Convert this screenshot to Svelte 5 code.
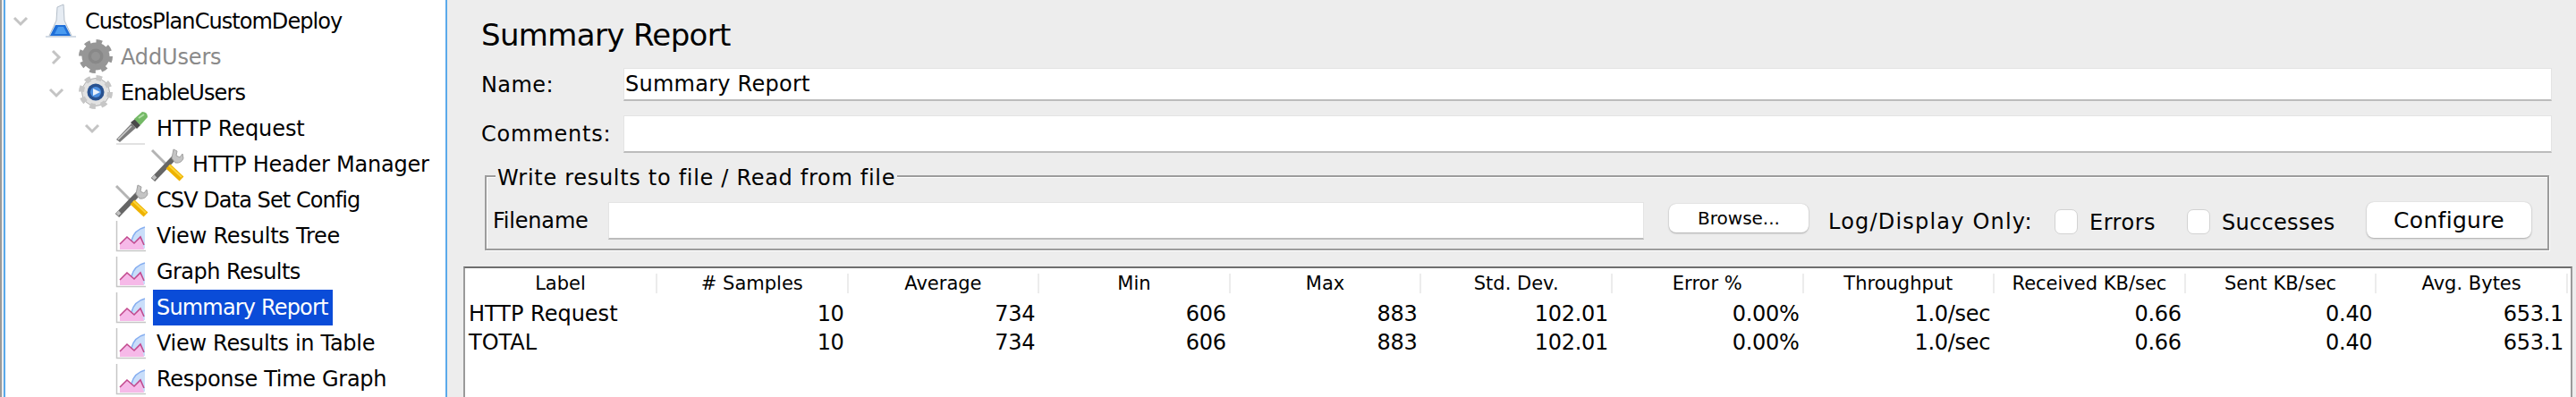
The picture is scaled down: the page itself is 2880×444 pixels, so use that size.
<script>
  const tree = [
    { depth: 0, arrow: 'down', icon: 'flask', label: 'CustosPlanCustomDeploy', ls: -0.95 },
    { depth: 1, arrow: 'right', icon: 'gearoff', label: 'AddUsers', off: true, ls: -0.15 },
    { depth: 1, arrow: 'down', icon: 'gear', label: 'EnableUsers', ls: -0.9 },
    { depth: 2, arrow: 'down', icon: 'dropper', label: 'HTTP Request', ls: -0.07 },
    { depth: 3, icon: 'tools', label: 'HTTP Header Manager', ls: -0.25 },
    { depth: 2, icon: 'tools', label: 'CSV Data Set Config', ls: -0.93 },
    { depth: 2, icon: 'chart', label: 'View Results Tree', ls: -0.22 },
    { depth: 2, icon: 'chart', label: 'Graph Results', ls: -0.55 },
    { depth: 2, icon: 'chart', label: 'Summary Report', selected: true, ls: -0.83 },
    { depth: 2, icon: 'chart', label: 'View Results in Table', ls: -0.3 },
    { depth: 2, icon: 'chart', label: 'Response Time Graph', ls: -0.3 }
  ];
  const headers = ['Label', '# Samples', 'Average', 'Min', 'Max', 'Std. Dev.', 'Error %', 'Throughput', 'Received KB/sec', 'Sent KB/sec', 'Avg. Bytes'];
  const rows = [
    ['HTTP Request', '10', '734', '606', '883', '102.01', '0.00%', '1.0/sec', '0.66', '0.40', '653.1'],
    ['TOTAL', '10', '734', '606', '883', '102.01', '0.00%', '1.0/sec', '0.66', '0.40', '653.1']
  ];
</script>

<div class="page">
  <div class="strip"></div>
  <aside class="tree">
    {#each tree as n}
      <div class="node" style="padding-left:{40 * n.depth + 3}px">
        <span class="arrow">
          {#if n.arrow === 'down'}
            <svg width="18" height="12" viewBox="0 0 18 12"><path d="M2 2 L9 9 L16 2" /></svg>
          {:else if n.arrow === 'right'}
            <svg width="12" height="18" viewBox="0 0 12 18"><path d="M2 2 L9 9 L2 16" /></svg>
          {/if}
        </span>
        <span class="icon">
          <svg width="40" height="40" viewBox="0 0 40 40" class="pic">
            {#if n.icon === 'flask'}
              <path d="M16 4 L23 1 L24 19 L32 36 L7 36 L15 19 Z" fill="#e6ecf3" stroke="#b4bec9" stroke-width="1" />
              <path d="M14 24 L25 24 L31 36 L8 36 Z" fill="#1f6fd8" />
              <path d="M17 26 L23 26 L27 34 L13 34 Z" fill="#4a9bf0" />
              <path d="M3 37 L37 37" stroke="#c4cfdc" stroke-width="1.5" />
            {:else if n.icon === 'gearoff'}
              <circle cx="19" cy="19" r="15.5" fill="#969696" />
              <circle cx="19" cy="19" r="16" fill="none" stroke="#969696" stroke-width="6" stroke-dasharray="6.3 6.27" />
              <circle cx="19" cy="19" r="8.5" fill="#888" />
              <circle cx="19" cy="19" r="5" fill="#949494" />
            {:else if n.icon === 'gear'}
              <circle cx="19" cy="19" r="15.5" fill="#e2e2e2" stroke="#b0b0b0" stroke-width="1" />
              <circle cx="19" cy="19" r="16" fill="none" stroke="#c6c6c6" stroke-width="6" stroke-dasharray="6.3 6.27" />
              <circle cx="19" cy="19" r="9.5" fill="#28518f" />
              <circle cx="19" cy="19" r="6" fill="#4d8fe0" />
              <path d="M16 15 L24 19 L16 23 Z" fill="#eaf2fc" />
            {:else if n.icon === 'dropper'}
              <path d="M2 37 L34 37" stroke="#d8d8d8" stroke-width="1.5" />
              <path d="M2 32 L19 14 L24 19 L6 35 Z" fill="#7c7c7c" />
              <path d="M4 32 L19 17" stroke="#d2d2d2" stroke-width="1.5" />
              <path d="M18 13 L23 9 L29 16 L25 20 Z" fill="#4a4a4a" />
              <path d="M22 9 L31 1 Q37 1 37 7 L29 16 Z" fill="#74b966" />
              <path d="M27 8 L33 4" stroke="#b0dfa6" stroke-width="2" />
            {:else if n.icon === 'tools'}
              <path d="M2 4 L21 23" stroke="#b4b4b4" stroke-width="3" />
              <path d="M3 37 L27 12" stroke="#666" stroke-width="6" />
              <path d="M3 36 L6 33" stroke="#c0c0c0" stroke-width="4" />
              <path d="M24 13 L26 3 L30 5 L29 10 L33 12 L36 8 L37 13 Q35 19 28 18 Z" fill="#c4c4c4" stroke="#a0a0a0" stroke-width="1" />
              <path d="M20 22 L35 36" stroke="#eeb200" stroke-width="7" />
              <path d="M21 21 L35 34" stroke="#fbd53a" stroke-width="2" />
            {:else}
              <path d="M2.5 3 L2.5 36.5 L35 36.5" fill="none" stroke="#c6c6c6" stroke-width="1.5" />
              <path d="M19 34 L19 25 Q22 13 34 10 L34 34 Z" fill="#c9defa" />
              <path d="M19 25 Q22 13 34 10" fill="none" stroke="#86aef0" stroke-width="1.5" />
              <path d="M6 35 L6 29 L14 21 L22 28 L29 21 L33 35 Z" fill="#f6b9e8" />
              <path d="M6 29 L14 21 L22 28 L29 21 L33 30" fill="none" stroke="#c2498e" stroke-width="1.6" />
            {/if}
          </svg>
        </span>
        <span class="lbl" class:off={n.off} class:sel={n.selected} style="letter-spacing:{n.ls}px">{n.label}</span>
      </div>
    {/each}
  </aside>

  <main class="main">
    <h1 class="title">Summary Report</h1>
    <div class="row name">
      <span class="cap name-cap">Name:</span>
      <div class="field name-field">Summary Report</div>
    </div>
    <div class="row comments">
      <span class="cap comments-cap">Comments:</span>
      <div class="field"></div>
    </div>

    <section class="group">
      <div class="legend">Write results to file / Read from file</div>
      <div class="file-row">
        <span class="fname">Filename</span>
        <div class="field file"></div>
        <button class="btn browse">Browse...</button>
        <span class="log">Log/Display Only:</span>
        <span class="check"></span><span class="chk-label errors">Errors</span>
        <span class="check"></span><span class="chk-label successes">Successes</span>
        <button class="btn configure">Configure</button>
      </div>
    </section>

    <div class="table">
      <div class="grid head">
        {#each headers as h}<div class="th">{h}</div>{/each}
      </div>
      {#each rows as r}
        <div class="grid data">
          {#each r as c, i}<div class="td" class:first={i === 0}>{c}</div>{/each}
        </div>
      {/each}
    </div>
  </main>
</div>

<style>
  :global(body) { margin: 0; background: #ededed; }
  .page {
    display: flex;
    width: 2880px;
    height: 444px;
    overflow: hidden;
    background: #ededed;
    font-family: "DejaVu Sans", sans-serif;
    color: #000;
    font-size: 24px;
  }
  .strip {
    width: 2px;
    margin-right: 2px;
    background: #9a9a9a;
    flex: none;
  }
  .tree {
    width: 492px;
    flex: none;
    background: #fff;
    border-left: 2px solid #5aa9ea;
    border-right: 2px solid #5aa9ea;
    padding-top: 4px;
    overflow: hidden;
  }
  .node {
    display: flex;
    align-items: center;
    height: 40px;
    margin-left: -6px;
    white-space: nowrap;
  }
  .arrow {
    width: 40px;
    height: 40px;
    flex: none;
    display: flex;
    align-items: center;
    justify-content: center;
  }
  .arrow path { fill: none; stroke: #c4c4c4; stroke-width: 3; }
  .icon { width: 48px; flex: none; height: 40px; padding-left: 5px; box-sizing: border-box; }
  .pic { display: block; filter: blur(0.5px); }
  .lbl { padding: 0 5px 0 4px; line-height: 40px; }
  .lbl.off { color: #8a8a8a; }
  .lbl.sel { background: #0a4cd8; color: #fff; }

  .main { flex: 1; min-width: 0; display: flex; flex-direction: column; }
  .title {
    margin: 0;
    height: 76px;
    padding: 19px 0 0 38px;
    box-sizing: border-box;
    font-weight: 400;
    font-size: 34px;
    line-height: 40px;
    letter-spacing: -0.65px;
  }
  .row { display: flex; align-items: center; padding: 0 27px 0 38px; }
  .cap { width: 159px; flex: none; }
  .name-cap { letter-spacing: 0.4px; }
  .comments-cap { letter-spacing: 0.8px; }
  .row .field { flex: 1; }
  .name { height: 37px; }
  .comments { height: 42px; margin-top: 16px; }
  .field {
    height: 100%;
    box-sizing: border-box;
    background: #fff;
    border: 1px solid #e4e4e4;
    border-bottom: 2px solid #bcbcbc;
  }
  .name-field { padding-left: 1px; line-height: 34px; letter-spacing: 0.25px; }

  .group {
    margin: 25px 30px 0 42px;
    height: 84px;
    box-sizing: border-box;
    border: 2px solid #9c9c9c;
    box-shadow: inset 1px 1px 0 #fff, 1px 1px 0 #fff;
  }
  .legend {
    width: fit-content;
    margin: -13px 0 0 10px;
    padding: 0 2px;
    height: 28px;
    line-height: 28px;
    background: #ededed;
    letter-spacing: 0.7px;
  }
  .file-row {
    display: flex;
    align-items: center;
    height: 42px;
    margin-top: 13px;
    padding-left: 7px;
  }
  .fname { width: 129px; flex: none; letter-spacing: -0.2px; }
  .file { width: 1158px; flex: none; }
  .btn {
    background: #fff;
    border: none;
    border-radius: 8px;
    box-shadow: 0 1px 2px #aaa, 0 0 1px #bbb;
    font-family: inherit;
    color: #000;
    padding: 0;
    flex: none;
  }
  .browse { width: 156px; height: 32px; margin-left: 28px; font-size: 20px; margin-top: -6px; }
  .log { width: 227px; margin-left: 22px; margin-right: 26px; flex: none; white-space: nowrap; letter-spacing: 1.2px; margin-top: 2px; }
  .check {
    width: 26px;
    height: 28px;
    flex: none;
    box-sizing: border-box;
    background: #fff;
    border: 1px solid #d2d2d2;
    border-radius: 7px;
    margin-top: 2px;
  }
  .chk-label { margin-left: 13px; flex: none; margin-top: 4px; }
  .errors { width: 109px; letter-spacing: 0.5px; }
  .successes { width: 162px; letter-spacing: 0.3px; }
  .configure { width: 184px; height: 40px; font-size: 25px; letter-spacing: 0.3px; margin-top: -2px; }

  .table {
    margin: 18px 4px -40px 18px;
    flex: 1;
    background: #fff;
    border-left: 2px solid #9a9a9a;
    border-right: 2px solid #9a9a9a;
    border-top: 2px solid #6e6e6e;
  }
  .grid { display: grid; grid-template-columns: 215px repeat(10, 213.6px); }
  .head { padding-top: 6px; height: 35px; box-sizing: border-box; }
  .th {
    height: 22px;
    line-height: 22px;
    font-size: 21px;
    text-align: center;
    border-right: 2px solid #ececec;
    white-space: nowrap;
  }
  .data { height: 32px; line-height: 32px; }
  .td { text-align: right; padding-right: 5px; letter-spacing: -0.3px; }
  .td.first { text-align: left; padding: 0 0 0 4px; letter-spacing: 0; }
</style>
